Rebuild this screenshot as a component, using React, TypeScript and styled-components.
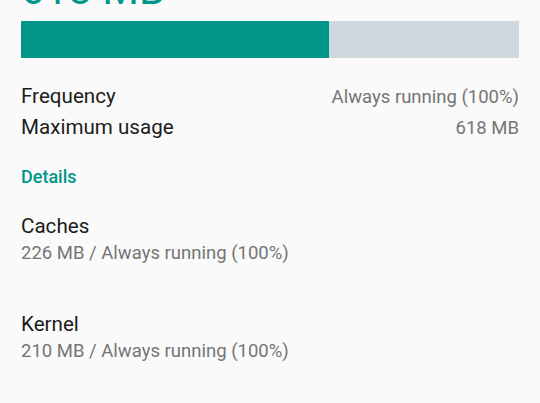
import styled, {createGlobalStyle} from "styled-components";

const Global = createGlobalStyle`
  html, body {
    margin: 0;
    padding: 0;
    background: #fafafa;
    font-family: Roboto, "Noto Sans", sans-serif;
  }
`

type Process = {name: string; size: string; freq: string}

const processes: Process[] = [
  {name: "Caches", size: "226 MB", freq: "Always running (100%)"},
  {name: "Kernel", size: "210 MB", freq: "Always running (100%)"},
]

const App = () => {
  const usedPct = 61.85
  return (
    <>
      <Global/>
      <Page>
        <Total>618 MB</Total>
        <Bar>
          <Fill style={{width: `${usedPct}%`}}/>
        </Bar>
        <Stats>
          <StatRow>
            <Label>Frequency</Label>
            <Value>Always running (100%)</Value>
          </StatRow>
          <StatRow>
            <Label>Maximum usage</Label>
            <Value>618 MB</Value>
          </StatRow>
        </Stats>
        <SectionTitle>Details</SectionTitle>
        <List>
          {processes.map((p) => (
            <Item key={p.name}>
              <Label>{p.name}</Label>
              <Sub>{p.size} / {p.freq}</Sub>
            </Item>
          ))}
        </List>
      </Page>
    </>
  )
}

export default App;

const Page = styled.div`
  padding: 0 21px;
  height: 403px;
  overflow: hidden;
`

const Total = styled.div`
  margin-top: -34px;
  height: 40px;
  line-height: 48px;
  font-size: 42px;
  color: #009688;
`

const Bar = styled.div`
  display: flex;
  height: 37px;
  margin-top: 15px;
  background: #cfd8dc;
`

const Fill = styled.div`
  background: #009688;
  height: 100%;
`

const Stats = styled.div`
  margin-top: 23px;
  display: flex;
  flex-direction: column;
`

const StatRow = styled.div`
  display: flex;
  justify-content: space-between;
  align-items: baseline;
  height: 31px;
  line-height: 31px;
`

const Label = styled.div`
  font-size: 20.6px;
  color: #1c1c1c;
`

const Value = styled.div`
  font-size: 18.5px;
  color: #757575;
`

const SectionTitle = styled.div`
  margin-top: 22px;
  font-size: 18px;
  font-weight: 500;
  color: #009688;
  line-height: 24px;
`

const List = styled.div`
  margin-top: 24px;
  display: flex;
  flex-direction: column;
  gap: 44px;
`

const Item = styled.div`
  display: flex;
  flex-direction: column;
  line-height: 27px;
`

const Sub = styled.div`
  font-size: 18.5px;
  color: #757575;
`
